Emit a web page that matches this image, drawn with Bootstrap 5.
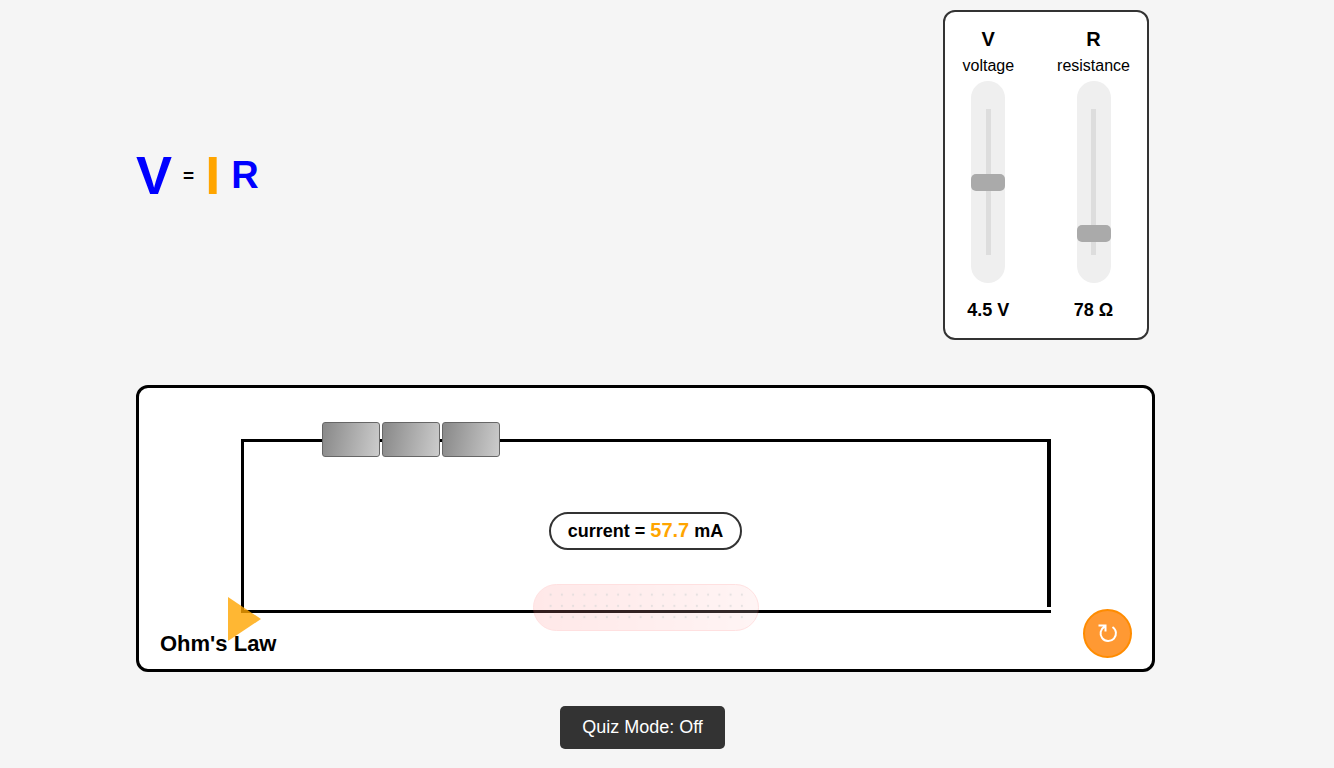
<!DOCTYPE html>
<html lang="en">
<head>
<meta charset="utf-8">
<meta name="viewport" content="width=device-width, initial-scale=1">
<title>Ohm's Law</title>
<link href="https://cdn.jsdelivr.net/npm/bootstrap@5.3.0/dist/css/bootstrap.min.css" rel="stylesheet">
<style>
body { background: #f5f5f5; color: #000; font-family: "Liberation Sans", Arial, sans-serif; line-height: 1.2; }
.lab { padding: 10px 179px 0 136px; }
.formula { line-height: 1; gap: 11px; }
.sym-v { font-size: 54px; color: #00f; }
.sym-eq { font-size: 19px; }
.sym-i { font-size: 54px; color: orange; }
.sym-r { font-size: 38px; color: #00f; }
.controls { border: 2px solid #333; border-radius: 12px; padding: 15px 17px 17px; gap: 43px; margin-right: 6px; }
.dial-sym { font-size: 20px; line-height: 24px; }
.dial-name { font-size: 16px; line-height: 20px; margin-top: 5px; }
.dial-val { font-size: 18px; line-height: 22px; margin-top: 16px; }
.dial { width: 34px; height: 202px; margin-top: 5px; padding: 28px 0; background: #efefef; border-radius: 17px; }
.dial input { -webkit-appearance: none; appearance: none; writing-mode: vertical-lr; direction: rtl; display: block; width: 34px; height: 146px; margin: 0; background: linear-gradient(#ddd, #ddd) center / 5px 100% no-repeat; }
.dial input::-webkit-slider-thumb { -webkit-appearance: none; width: 34px; height: 17px; border-radius: 5px; background: #aaa; }
.circuit { border: 3px solid #000; border-radius: 12px; margin-top: 45px; padding: 51px 10% 56px; }
.wire { height: 174px; border: 3px solid #000; border-right: 0; padding-right: 4px; margin-right: -1px; }
.wire::after { content: ""; position: absolute; right: 0; top: 0; bottom: 3px; width: 4px; background: #000; }
.cells { left: calc(10% - 3px); top: -20px; gap: 2px; }
.cell { width: 58px; height: 35px; border: 1px solid #666; border-radius: 3px; background: linear-gradient(100deg, #888, #ccc); }
.readout { border: 2px solid #333; border-radius: 19px; height: 38px; padding: 0 17px; font-size: 18px; line-height: 32px; top: 70px; }
.readout output { color: orange; font-size: 20px; }
.resistor { width: 226px; height: 47px; top: 142px; }
.arrow { left: 89px; bottom: 28px; }
.caption { left: 21px; bottom: 11px; font-size: 22px; line-height: 28px; }
.reset { right: 20px; bottom: 11px; width: 49px; height: 49px; border: 2px solid #ff8c00; background: #ff9933; }
.quiz { font-size: 18px; line-height: 21px; padding: 11px 22px; background: #333; border: 0; border-radius: 5px; color: #fff; margin-top: 34px; margin-right: 6px; }
</style>
</head>
<body>
<main class="lab">
  <div class="d-flex justify-content-between align-items-center">
    <div class="formula d-flex align-items-center fw-bold">
      <span class="sym-v">V</span><span class="sym-eq">=</span><span class="sym-i">I</span><span class="sym-r">R</span>
    </div>
    <div class="controls d-flex bg-white">
      <div class="d-flex flex-column align-items-center">
        <div class="dial-sym fw-bold">V</div>
        <label class="dial-name" for="volt">voltage</label>
        <div class="dial"><input type="range" id="volt" min="0" max="9" step="0.1" value="4.5"></div>
        <div class="dial-val fw-bold">4.5 V</div>
      </div>
      <div class="d-flex flex-column align-items-center">
        <div class="dial-sym fw-bold">R</div>
        <label class="dial-name" for="res">resistance</label>
        <div class="dial"><input type="range" id="res" min="0" max="800" value="78"></div>
        <div class="dial-val fw-bold">78 Ω</div>
      </div>
    </div>
  </div>

  <section class="circuit bg-white position-relative">
    <div class="wire position-relative d-flex justify-content-center">
      <div class="cells position-absolute d-flex">
        <div class="cell"></div><div class="cell"></div><div class="cell"></div>
      </div>
      <div class="readout bg-white position-absolute fw-bold text-nowrap">current = <output>57.7</output> mA</div>
      <svg class="resistor position-absolute" viewBox="0 0 226 47" aria-hidden="true">
        <defs>
          <linearGradient id="heat"><stop offset="0" stop-color="#ff9090"/><stop offset="1" stop-color="#ffcccc"/></linearGradient>
          <pattern id="dots" width="11.25" height="11.25" patternUnits="userSpaceOnUse" x="12" y="5"><circle cx="5.6" cy="5.6" r="1.1" fill="#333"/></pattern>
        </defs>
        <g opacity=".2">
          <rect x=".5" y=".5" width="225" height="46" rx="23" fill="url(#heat)" stroke="#ff6b6b"/>
          <rect x="12" y="5" width="203" height="34" fill="url(#dots)" opacity=".6"/>
        </g>
      </svg>
    </div>
    <h1 class="caption position-absolute fw-bold m-0">Ohm's Law</h1>
    <svg class="arrow position-absolute" width="33" height="44" viewBox="0 0 33 44" aria-hidden="true"><path d="M0 0L33 22L0 44Z" fill="orange" opacity=".8"/></svg>
    <button type="button" class="reset position-absolute rounded-circle p-0 d-flex align-items-center justify-content-center" aria-label="Reset">
      <svg width="20" height="20" viewBox="0 0 20 20" fill="none" stroke="#fff" stroke-width="2" aria-hidden="true"><path d="M.5 1.500H7.500V7.500M6.500 2.700A7.700 7.700 0 1 0 14.500 3"/></svg>
    </button>
  </section>

  <div class="text-center"><button type="button" class="quiz">Quiz Mode: Off</button></div>
</main>
<script src="https://cdn.jsdelivr.net/npm/bootstrap@5.3.0/dist/js/bootstrap.bundle.min.js"></script>
</body>
</html>
